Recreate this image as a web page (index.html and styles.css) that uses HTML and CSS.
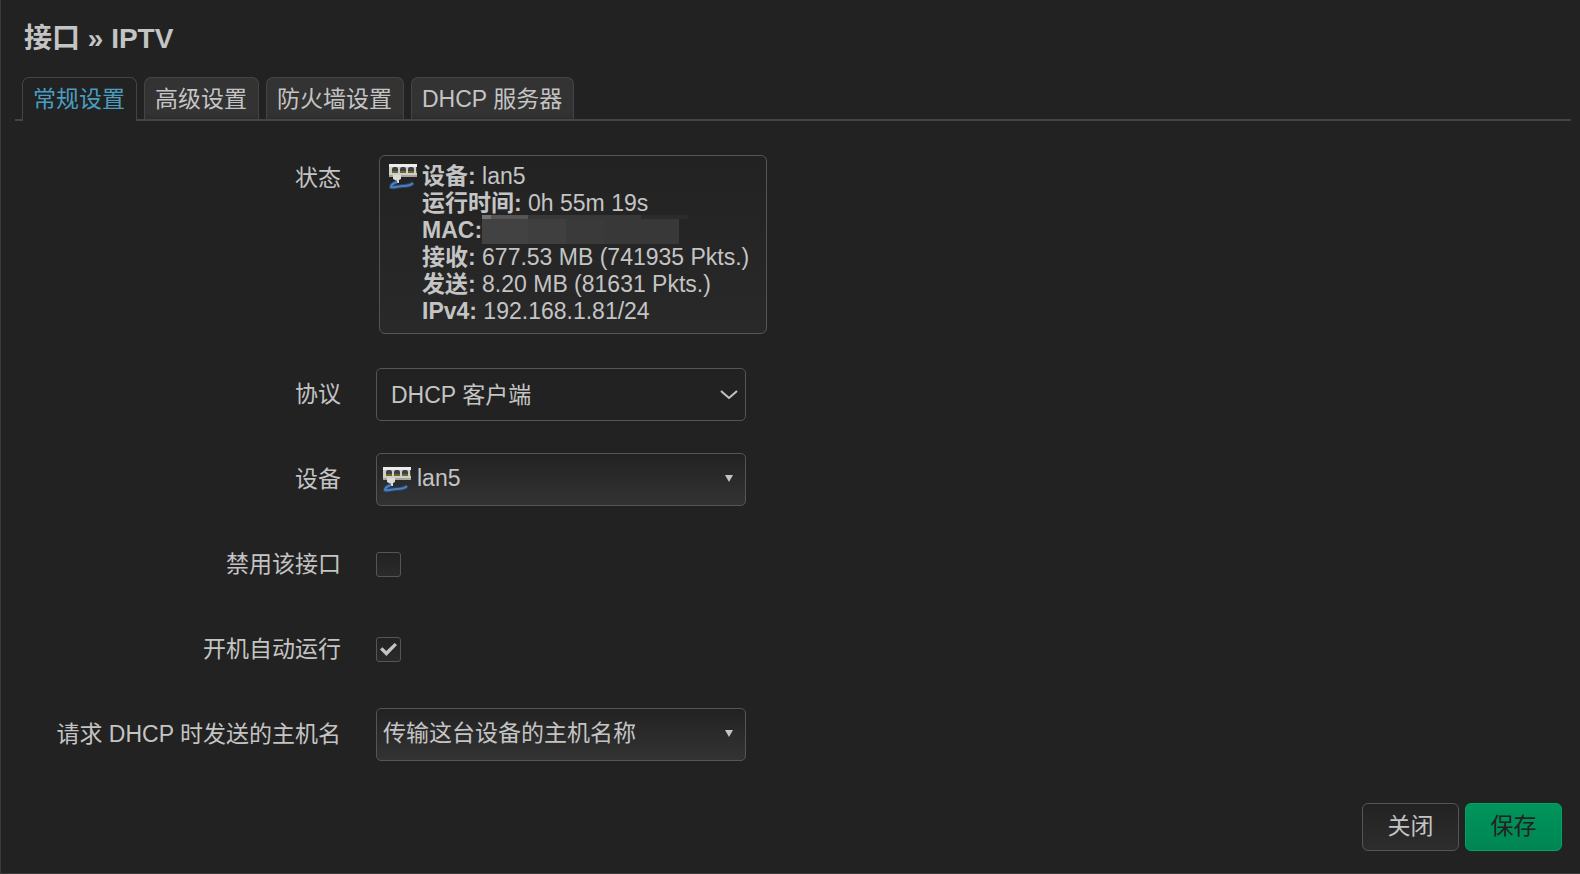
FILE: index.html
```
<!DOCTYPE html>
<html lang="zh-CN">
<head>
    <meta charset="UTF-8">
    <meta name="viewport" content="width=device-width, initial-scale=1.0">
    <title>接口 » IPTV</title>

    <link rel="stylesheet" href="styles.css">
</head>
<body>
    <!-- 网口图标 -->
    <svg class="defs" width="0" height="0" aria-hidden="true">
        <symbol id="port" viewBox="0 0 28 26">
            <rect x="0" y="0" width="28" height="13" fill="#cfcfca"/>
            <rect x="0" y="0" width="28" height="3" fill="#ececec"/>
            <rect x="0" y="11" width="28" height="2" fill="#a5a5a0"/>
            <path d="M3 5q0-2 2-2h2q2 0 2 2v4H3zM11 5q0-2 2-2h2q2 0 2 2v4h-6zM19 5q0-2 2-2h2q2 0 2 2v4h-6zM27 3h1v6h-1z" fill="#3c4046"/>
            <path d="M3 7h6v2H3zM11 7h6v2h-6zM19 7h6v2h-6zM27 7h1v2h-1z" fill="#6f6624"/>
            <path d="M4 11h8v4l-2 1v3H6v-3l-2-1z" fill="#dcdcd8"/>
            <path d="M8 18C5 19 2 21 2 23c3 1 7-1 12-1 4 0 7 0 10-3" fill="none" stroke="#26436e" stroke-width="4"/>
            <path d="M8 18C5 19 2 21 2 23c3 1 7-1 12-1 4 0 7 0 10-3" fill="none" stroke="#4d7fb8" stroke-width="2"/>
        </symbol>
    </svg>

    <div class="modal">
        <h4 class="title">接口 » IPTV</h4>

        <ul class="tabs">
            <li class="tab current"><a href="#general">常规设置</a></li>
            <li class="tab"><a href="#advanced">高级设置</a></li>
            <li class="tab"><a href="#firewall">防火墙设置</a></li>
            <li class="tab"><a href="#dhcp">DHCP 服务器</a></li>
        </ul>

        <form class="form" id="general">
            <div class="row row-status">
                <span class="label">状态</span>
                <div class="status">
                    <svg class="port"><use href="#port"/></svg>
                    <div class="info">
                        <div><b>设备:</b> lan5</div>
                        <div><b>运行时间:</b> 0h 55m 19s</div>
                        <div class="mac"><b>MAC:</b><span class="mask"></span></div>
                        <div><b>接收:</b> 677.53 MB (741935 Pkts.)</div>
                        <div><b>发送:</b> 8.20 MB (81631 Pkts.)</div>
                        <div><b>IPv4:</b> 192.168.1.81/24</div>
                    </div>
                </div>
            </div>

            <div class="row">
                <label class="label" for="proto">协议</label>
                <div class="select">
                    <select id="proto">
                        <option>DHCP 客户端</option>
                    </select>
                    <svg class="chevron" viewBox="0 0 18 10"><path d="M1 1l8 7 8-7" fill="none" stroke="#c4c4c4" stroke-width="2"/></svg>
                </div>
            </div>

            <div class="row">
                <label class="label" for="device">设备</label>
                <div class="select dropdown with-icon">
                    <svg class="port"><use href="#port"/></svg>
                    <select id="device">
                        <option>lan5</option>
                    </select>
                    <svg class="arrow" viewBox="0 0 8 7"><path d="M0 0h8L4 7z" fill="#c4c4c4"/></svg>
                </div>
            </div>

            <div class="row">
                <label class="label" for="disabled">禁用该接口</label>
                <input type="checkbox" id="disabled">
            </div>

            <div class="row">
                <label class="label" for="auto">开机自动运行</label>
                <input type="checkbox" id="auto" checked>
            </div>

            <div class="row">
                <label class="label" for="hostname">请求 DHCP 时发送的主机名</label>
                <div class="select dropdown">
                    <select id="hostname">
                        <option>传输这台设备的主机名称</option>
                    </select>
                    <svg class="arrow" viewBox="0 0 8 7"><path d="M0 0h8L4 7z" fill="#c4c4c4"/></svg>
                </div>
            </div>
        </form>

        <div class="buttons">
            <button type="button" class="btn">关闭</button>
            <button type="button" class="btn btn-save">保存</button>
        </div>
    </div>
</body>
</html>
```
FILE: styles.css
```
* {
    margin: 0;
    padding: 0;
    box-sizing: border-box;
}

body {
    background-color: #222;
    color: #c4c4c4;
    font-family: "Liberation Sans", "Noto Sans CJK SC", sans-serif;
    font-size: 23px;
    line-height: 28px;
}

.defs {
    position: absolute;
}

.modal {
    display: flex;
    flex-direction: column;
    min-height: 100vh;
    padding: 21px 9px 22px 14px;
    border-left: 1px solid #3a3a3a;
    border-bottom: 1px solid #3a3a3a;
}

.title {
    padding-left: 9px;
    font-size: 28px;
    line-height: 36px;
}

/* 标签页 */
.tabs {
    display: flex;
    gap: 7px;
    margin-top: 20px;
    padding-left: 7px;
    list-style: none;
    border-bottom: 2px solid #444;
}

.tab {
    height: 42px;
    border: 1px solid #444;
    border-bottom: none;
    border-radius: 7px 7px 0 0;
    background: linear-gradient(#333 85%, #2d2d2d);
}

.tab a {
    display: block;
    padding: 0 11px 0 10px;
    color: #c4c4c4;
    line-height: 42px;
    text-decoration: none;
}

.tabs .current {
    height: 44px;
    margin-bottom: -2px;
    background: #222;
}

.tabs .current a {
    color: #4a9dc0;
}

/* 表单 */
.form {
    display: flex;
    flex-direction: column;
    gap: 32px;
    margin-top: 34px;
}

.row {
    display: flex;
    align-items: center;
    gap: 35px;
    min-height: 53px;
}

.row .label {
    width: 326px;
    padding-bottom: 2px;
    text-align: right;
}

.row-status {
    align-items: flex-start;
    margin-bottom: 2px;
}

.row-status .label {
    padding-top: 9px;
}

.status {
    display: flex;
    gap: 5px;
    margin-left: 3px;
    padding: 7px 17px 8px 9px;
    border: 1px solid #555;
    border-radius: 6px;
    background: linear-gradient(#222, #292929);
    line-height: 27px;
}

.port {
    width: 28px;
    height: 26px;
}

.status .port {
    margin-top: 1px;
}

.mac {
    display: flex;
    height: 27px;
}

/* 打码的 MAC 地址 */
.mask {
    width: 206px;
    height: 29px;
    margin-top: -2px;
    background:
        linear-gradient(90deg, #737373 9px, #555 9px 46px, #383838 46px 159px, #2b2b2b 159px) 0 0 / 206px 4px no-repeat,
        linear-gradient(90deg, #424242 46px, #3f3f3f 46px 84px, #3a3a3a 84px 122px, #383838 122px) 0 4px / 197px 25px no-repeat;
}

.select {
    position: relative;
    width: 370px;
}

.select select {
    display: block;
    width: 100%;
    height: 53px;
    padding: 0 36px 0 14px;
    appearance: none;
    border: 1px solid #555;
    border-radius: 5px;
    background: #222;
    color: #c4c4c4;
    font: inherit;
}

.dropdown select {
    padding-bottom: 3px;
    padding-left: 6px;
    background: linear-gradient(#222, #333);
}

.with-icon select {
    padding-left: 40px;
}

.select svg {
    position: absolute;
    pointer-events: none;
}

.select .port {
    top: 14px;
    left: 7px;
}

.chevron {
    top: 22px;
    right: 8px;
    width: 18px;
    height: 10px;
}

.arrow {
    top: 22px;
    right: 13px;
    width: 8px;
    height: 7px;
}

input[type="checkbox"] {
    display: grid;
    place-items: center;
    width: 25px;
    height: 25px;
    appearance: none;
    border: 1px solid #555;
    border-radius: 3px;
    background: linear-gradient(#222, #2b2b2b);
}

input[type="checkbox"]:checked::before {
    content: "";
    width: 17px;
    height: 13px;
    background: #c4c4c4;
    clip-path: polygon(0 50%, 14% 32%, 37% 62%, 86% 0, 100% 16%, 38% 100%);
}

/* 底部按钮 */
.buttons {
    display: flex;
    justify-content: flex-end;
    gap: 6px;
    margin-top: auto;
    padding-right: 9px;
}

.btn {
    min-width: 97px;
    height: 48px;
    padding: 0 24px 2px;
    border: 1px solid #555;
    border-radius: 6px;
    background: linear-gradient(#222, #2d2d2d);
    color: #c4c4c4;
    font: inherit;
}

.btn-save {
    border-color: #00a566;
    background: linear-gradient(#00955c, #008552);
    color: #222;
}
```
